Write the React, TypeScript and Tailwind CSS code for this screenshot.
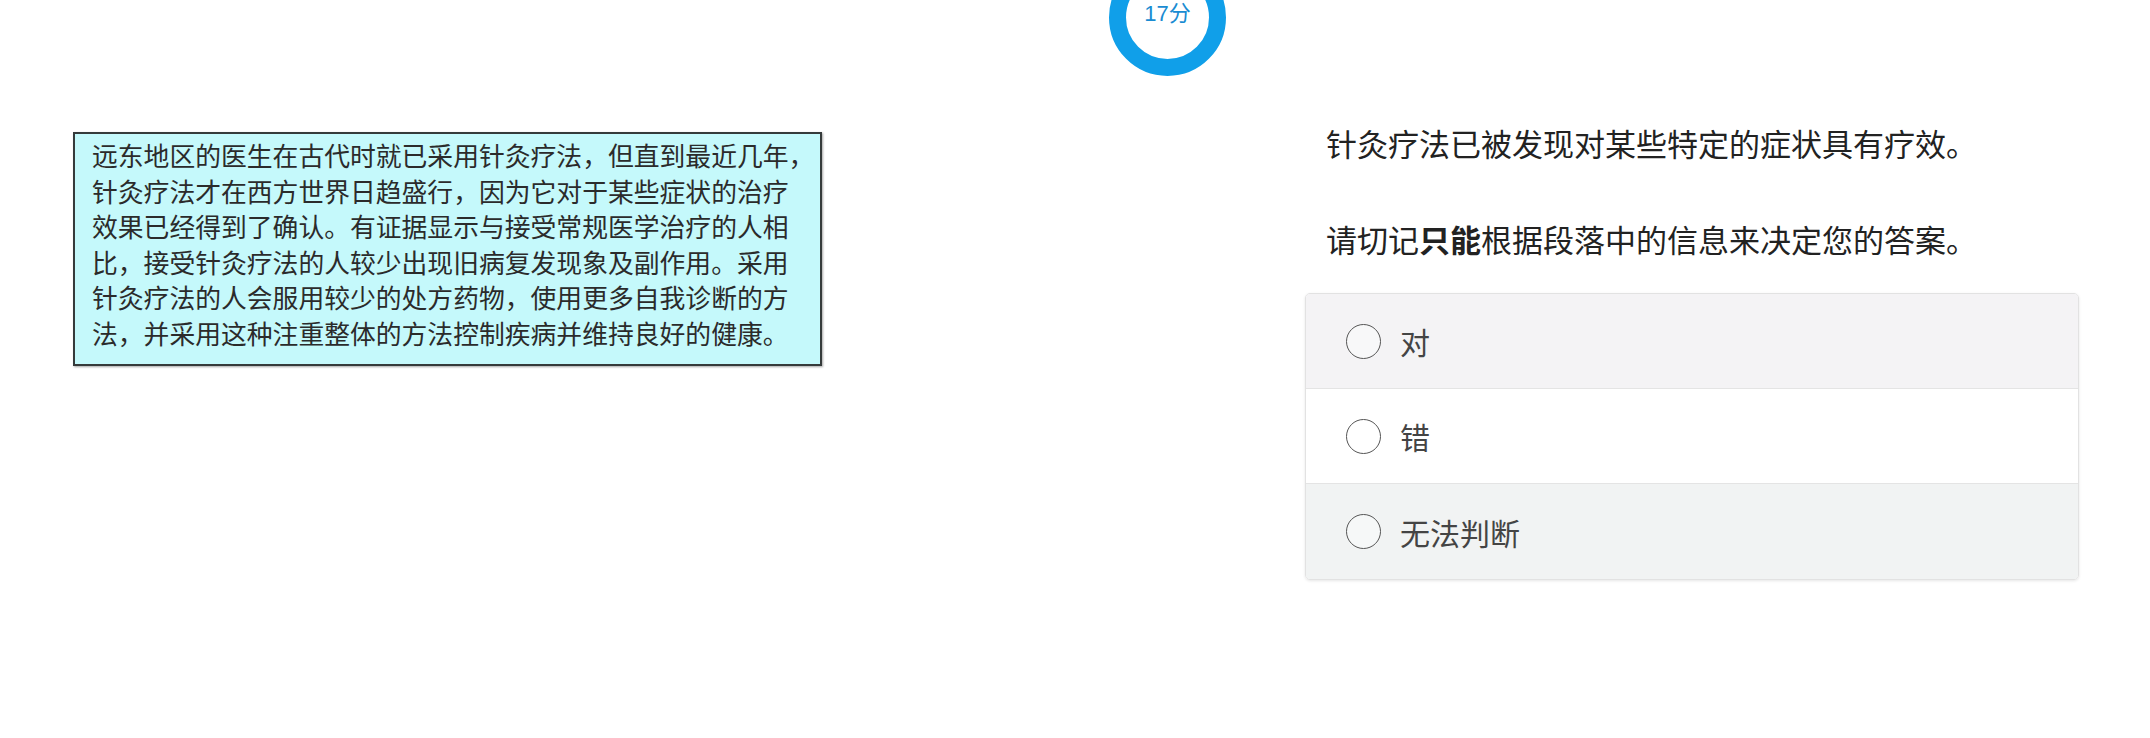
import React from 'react';

const passage = [
  '远东地区的医生在古代时就已采用针灸疗法，但直到最近几年，',
  '针灸疗法才在西方世界日趋盛行，因为它对于某些症状的治疗',
  '效果已经得到了确认。有证据显示与接受常规医学治疗的人相',
  '比，接受针灸疗法的人较少出现旧病复发现象及副作用。采用',
  '针灸疗法的人会服用较少的处方药物，使用更多自我诊断的方',
  '法，并采用这种注重整体的方法控制疾病并维持良好的健康。',
];

const options = [
  { label: '对', bg: 'bg-[#f4f3f5]' },
  { label: '错', bg: 'bg-white' },
  { label: '无法判断', bg: 'bg-[#f1f3f3]' },
];

function Timer() {
  return (
    <div className="flex items-start h-[76px] pl-[1109px]">
      <div className="-mt-[41px] w-[117px] h-[117px] shrink-0 rounded-full border-[17px] border-[#109fe9] bg-white flex items-center justify-center pb-[7px]">
        <span className="text-[22px] leading-none text-[#1a8cd2] font-['Liberation_Sans','Noto_Sans_CJK_SC',sans-serif]">
          17分
        </span>
      </div>
    </div>
  );
}

export default function App() {
  return (
    <div className="w-[2150px] h-[738px] bg-white overflow-hidden font-['Noto_Sans_CJK_SC',sans-serif]">
      <Timer />

      <div className="flex">
        <div className="w-[1305px] shrink-0 pl-[73px] pt-[56px]">
          <div className="w-[749px] border-2 border-[#353b3b] bg-[#c5f9fb] pl-[17px] pt-[3px] pb-[13px] shadow-[1px_1px_2px_rgba(0,0,0,0.35)]">
            {passage.map((line, i) => (
              <div
                key={i}
                className="whitespace-nowrap text-[25.8px] leading-[35.6px] text-[#2b2b2b] font-['Noto_Sans_CJK_SC',serif]"
              >
                {line}
              </div>
            ))}
          </div>
        </div>

        <div className="w-[774px] shrink-0 pt-[47px]">
          <p className="px-[21px] text-[31px] leading-[40px] text-[#222]">
            针灸疗法已被发现对某些特定的症状具有疗效。
          </p>
          <p className="mt-[56px] px-[21px] text-[31px] leading-[40px] text-[#222]">
            请切记<span className="font-bold">只能</span>根据段落中的信息来决定您的答案。
          </p>

          <div className="mt-[34px] rounded-[5px] border border-[#e2e2e2] overflow-hidden shadow-[0_1px_3px_rgba(0,0,0,0.1)]">
            {options.map((opt, i) => (
              <div
                key={opt.label}
                className={`h-[95px] flex items-center pl-[40px] gap-[19px] ${opt.bg} ${i < options.length - 1 ? 'border-b border-[#e4e4e4]' : ''}`}
              >
                <span className="w-[35px] h-[35px] rounded-full border-[1.5px] border-[#555] bg-white/40 shrink-0" />
                <span className="text-[30px] leading-none text-[#444]">{opt.label}</span>
              </div>
            ))}
          </div>
        </div>
      </div>
    </div>
  );
}
